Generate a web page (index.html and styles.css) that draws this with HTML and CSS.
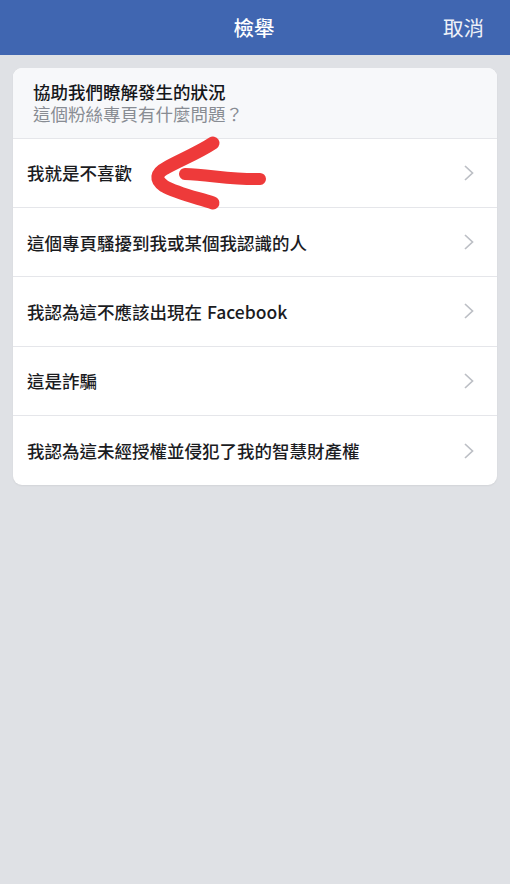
FILE: index.html
```html
<!DOCTYPE html>
<html lang="zh-Hant">
<head>
<meta charset="utf-8">
<title>檢舉</title>
<link rel="stylesheet" href="styles.css">
</head>
<body>
<header class="nav">
  <span class="nav-side"></span>
  <h1 class="nav-title">檢舉</h1>
  <span class="nav-side nav-cancel">取消</span>
</header>
<main class="card">
  <div class="card-head">
    <div class="head-title">協助我們瞭解發生的狀況</div>
    <div class="head-sub">這個粉絲專頁有什麼問題？</div>
  </div>
  <div class="row">
    <span>我就是不喜歡</span>
    <svg class="chev" viewBox="0 0 12 18"><path d="M2 2l7.5 7-7.5 7"/></svg>
    <svg class="arrow" viewBox="0 0 130 72"><path class="shaft" d="M45 39C70 40 95 45 120 44"/><path class="head" d="M73 8C58 18 38 26 26 33C16 38 15 45 24 51C36 58 54 62 73 68"/></svg>
  </div>
  <div class="row">
    <span>這個專頁騷擾到我或某個我認識的人</span>
    <svg class="chev" viewBox="0 0 12 18"><path d="M2 2l7.5 7-7.5 7"/></svg>
  </div>
  <div class="row">
    <span>我認為這不應該出現在 Facebook</span>
    <svg class="chev" viewBox="0 0 12 18"><path d="M2 2l7.5 7-7.5 7"/></svg>
  </div>
  <div class="row">
    <span>這是詐騙</span>
    <svg class="chev" viewBox="0 0 12 18"><path d="M2 2l7.5 7-7.5 7"/></svg>
  </div>
  <div class="row">
    <span>我認為這未經授權並侵犯了我的智慧財產權</span>
    <svg class="chev" viewBox="0 0 12 18"><path d="M2 2l7.5 7-7.5 7"/></svg>
  </div>
</main>
</body>
</html>
```
FILE: styles.css
```css
html, body {
  margin: 0;
  height: 100%;
}
body {
  background: #dfe1e5;
  font-family: "Noto Sans CJK TC", "Liberation Sans", sans-serif;
  overflow: hidden;
}
.nav {
  height: 54.5px;
  background: #4066b1;
  display: flex;
  align-items: center;
  justify-content: space-between;
  padding: 0 26px 0 0;
  color: #eef1f8;
  font-size: 20.5px;
}
.nav-side {
  width: 41px;
}
.nav-title {
  margin: 0;
  font-size: 20.5px;
  font-weight: 500;
  color: #fff;
  position: relative;
  left: 12px;
}
.nav-cancel {
  font-weight: 400;
  white-space: nowrap;
}
.card {
  margin: 13.5px 13px 0;
  background: #fff;
  border-radius: 9px;
  overflow: hidden;
  box-shadow: 0 1px 2px rgba(0, 0, 0, 0.06);
}
.card-head {
  height: 70.5px;
  box-sizing: border-box;
  padding: 13px 20px 0;
  background: #f7f8fa;
  font-size: 17.5px;
  border-bottom: 1px solid #e5e6ea;
}
.head-title {
  height: 22px;
  line-height: 22px;
  color: #15171b;
  font-weight: 500;
}
.head-sub {
  height: 22px;
  line-height: 22px;
  color: #888c93;
}
.row {
  height: 69.4px;
  box-sizing: border-box;
  padding: 0 22px 0 14px;
  display: flex;
  align-items: center;
  justify-content: space-between;
  position: relative;
  font-size: 17.5px;
  font-weight: 500;
  word-spacing: 1px;
  color: #1b1c1f;
  border-bottom: 1px solid #e5e6ea;
}
.row:last-child {
  border-bottom: 0;
}
.chev {
  width: 12px;
  height: 18px;
  flex: none;
}
.chev path {
  fill: none;
  stroke: #bcbfc5;
  stroke-width: 1.7;
}
.arrow {
  position: absolute;
  left: 127px;
  top: -4px;
  width: 130px;
  height: 72px;
  overflow: visible;
}
.arrow path {
  fill: none;
  stroke: #ee3a3a;
  stroke-linecap: round;
  stroke-linejoin: round;
}
.arrow .shaft {
  stroke-width: 12px;
}
.arrow .head {
  stroke-width: 13px;
}
```
